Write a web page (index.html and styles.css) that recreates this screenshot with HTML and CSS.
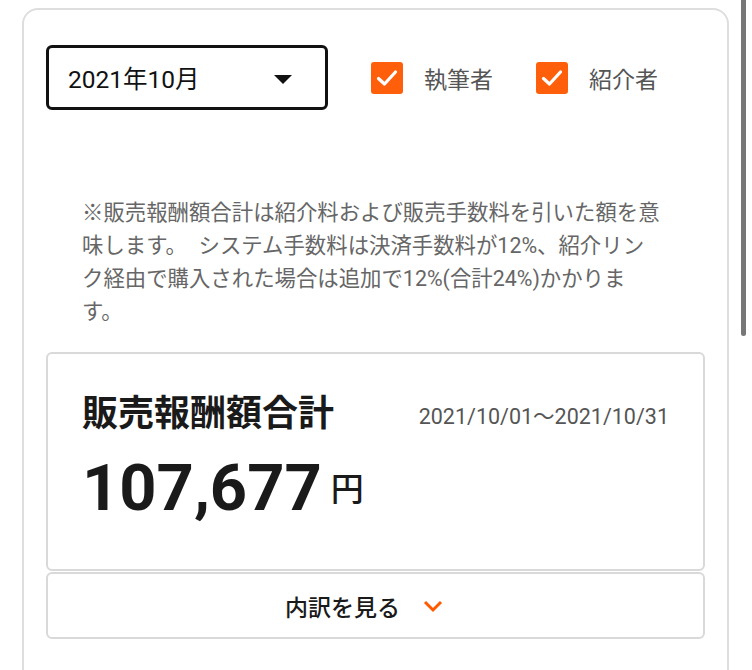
FILE: index.html
```html
<!DOCTYPE html>
<html lang="ja">
<head>
    <meta charset="UTF-8">
    <meta name="viewport" content="width=device-width, initial-scale=1.0">
    <title>販売報酬</title>
    <link rel="stylesheet" href="styles.css">
</head>
<body>
    <div class="panel">
        <div class="filters">
            <div class="month-select">
                <span>2021年10月</span>
                <span class="caret"></span>
            </div>
            <label class="check">
                <span class="box">
                    <svg width="22" height="18" viewBox="0 0 22 18"><path d="M2.5 9.5 L8.5 15 L19.5 3" fill="none" stroke="#fff" stroke-width="3.2" stroke-linecap="round" stroke-linejoin="round"/></svg>
                </span>
                執筆者
            </label>
            <label class="check">
                <span class="box">
                    <svg width="22" height="18" viewBox="0 0 22 18"><path d="M2.5 9.5 L8.5 15 L19.5 3" fill="none" stroke="#fff" stroke-width="3.2" stroke-linecap="round" stroke-linejoin="round"/></svg>
                </span>
                紹介者
            </label>
        </div>

        <p class="note">※販売報酬額合計は紹介料および販売手数料を引いた額を意味します。 システム手数料は決済手数料が12%、紹介リンク経由で購入された場合は追加で12%(合計24%)かかります。</p>

        <div class="summary">
            <div class="summary-head">
                <h2>販売報酬額合計</h2>
                <span class="period">2021/10/01〜2021/10/31</span>
            </div>
            <div class="amount">107,677<span class="yen">円</span></div>
        </div>
        <div class="details">
            内訳を見る
            <svg width="22" height="14" viewBox="0 0 22 14"><path d="M3 3 L11 11 L19 3" fill="none" stroke="#ff5a00" stroke-width="3"/></svg>
        </div>
    </div>
    <div class="scroll-thumb"></div>
</body>
</html>
```

FILE: styles.css
```css
body {
    margin: 0;
    background-color: #fff;
    font-family: Roboto, "Noto Sans CJK JP", sans-serif;
    color: #222;
    overflow: hidden;
}
.panel {
    margin: 8px 0 0 22px;
    width: 707px;
    min-height: 700px;
    box-sizing: border-box;
    border: 2px solid #dedede;
    border-radius: 16px;
    padding: 35px 22px 0 22px;
}
.filters {
    display: flex;
    align-items: center;
}
.month-select {
    width: 282px;
    height: 65px;
    box-sizing: border-box;
    border: 3px solid #111;
    border-radius: 6px;
    padding: 0 33px 0 19px;
    display: flex;
    align-items: center;
    justify-content: space-between;
    font-size: 24.5px;
    color: #111;
}
.caret {
    width: 0;
    height: 0;
    border-left: 9px solid transparent;
    border-right: 9px solid transparent;
    border-top: 9px solid #111;
    margin-top: 4px;
}
.check {
    display: flex;
    align-items: center;
    margin-left: 43px;
    font-size: 23px;
    color: #555;
}
.box {
    width: 32px;
    height: 32px;
    border-radius: 3px;
    background-color: #ff5f0a;
    display: flex;
    align-items: center;
    justify-content: center;
    margin-right: 21px;
}
.note {
    width: 581px;
    margin: 86px 0 0 36px;
    font-size: 21.4px;
    line-height: 33px;
    word-spacing: 0.3em;
    color: #666;
}
.summary {
    margin-top: 24px;
    border: 2px solid #d9d9d9;
    border-radius: 6px;
    padding: 40px 34px 45px 34px;
}
.summary-head {
    display: flex;
    justify-content: space-between;
    align-items: center;
}
.summary-head h2 {
    margin: 0;
    font-size: 36px;
    line-height: 41px;
    font-weight: bold;
    color: #1a1a1a;
}
.period {
    font-size: 21.5px;
    color: #555;
}
.amount {
    margin-top: 19px;
    font-size: 65px;
    line-height: 68px;
    font-weight: bold;
    color: #1a1a1a;
}
.yen {
    font-size: 33px;
    margin-left: 9px;
    font-weight: 500;
    vertical-align: 9px;
}
.details {
    margin-top: 1px;
    height: 67px;
    box-sizing: border-box;
    border: 2px solid #d9d9d9;
    border-radius: 6px;
    padding-right: 22px;
    display: flex;
    align-items: center;
    justify-content: center;
    gap: 22px;
    font-size: 23px;
    font-weight: 500;
    color: #1a1a1a;
}
.scroll-thumb {
    position: absolute;
    top: 0;
    left: 741px;
    width: 5px;
    height: 336px;
    background-color: #777;
    border-radius: 0 0 3px 3px;
}
```
